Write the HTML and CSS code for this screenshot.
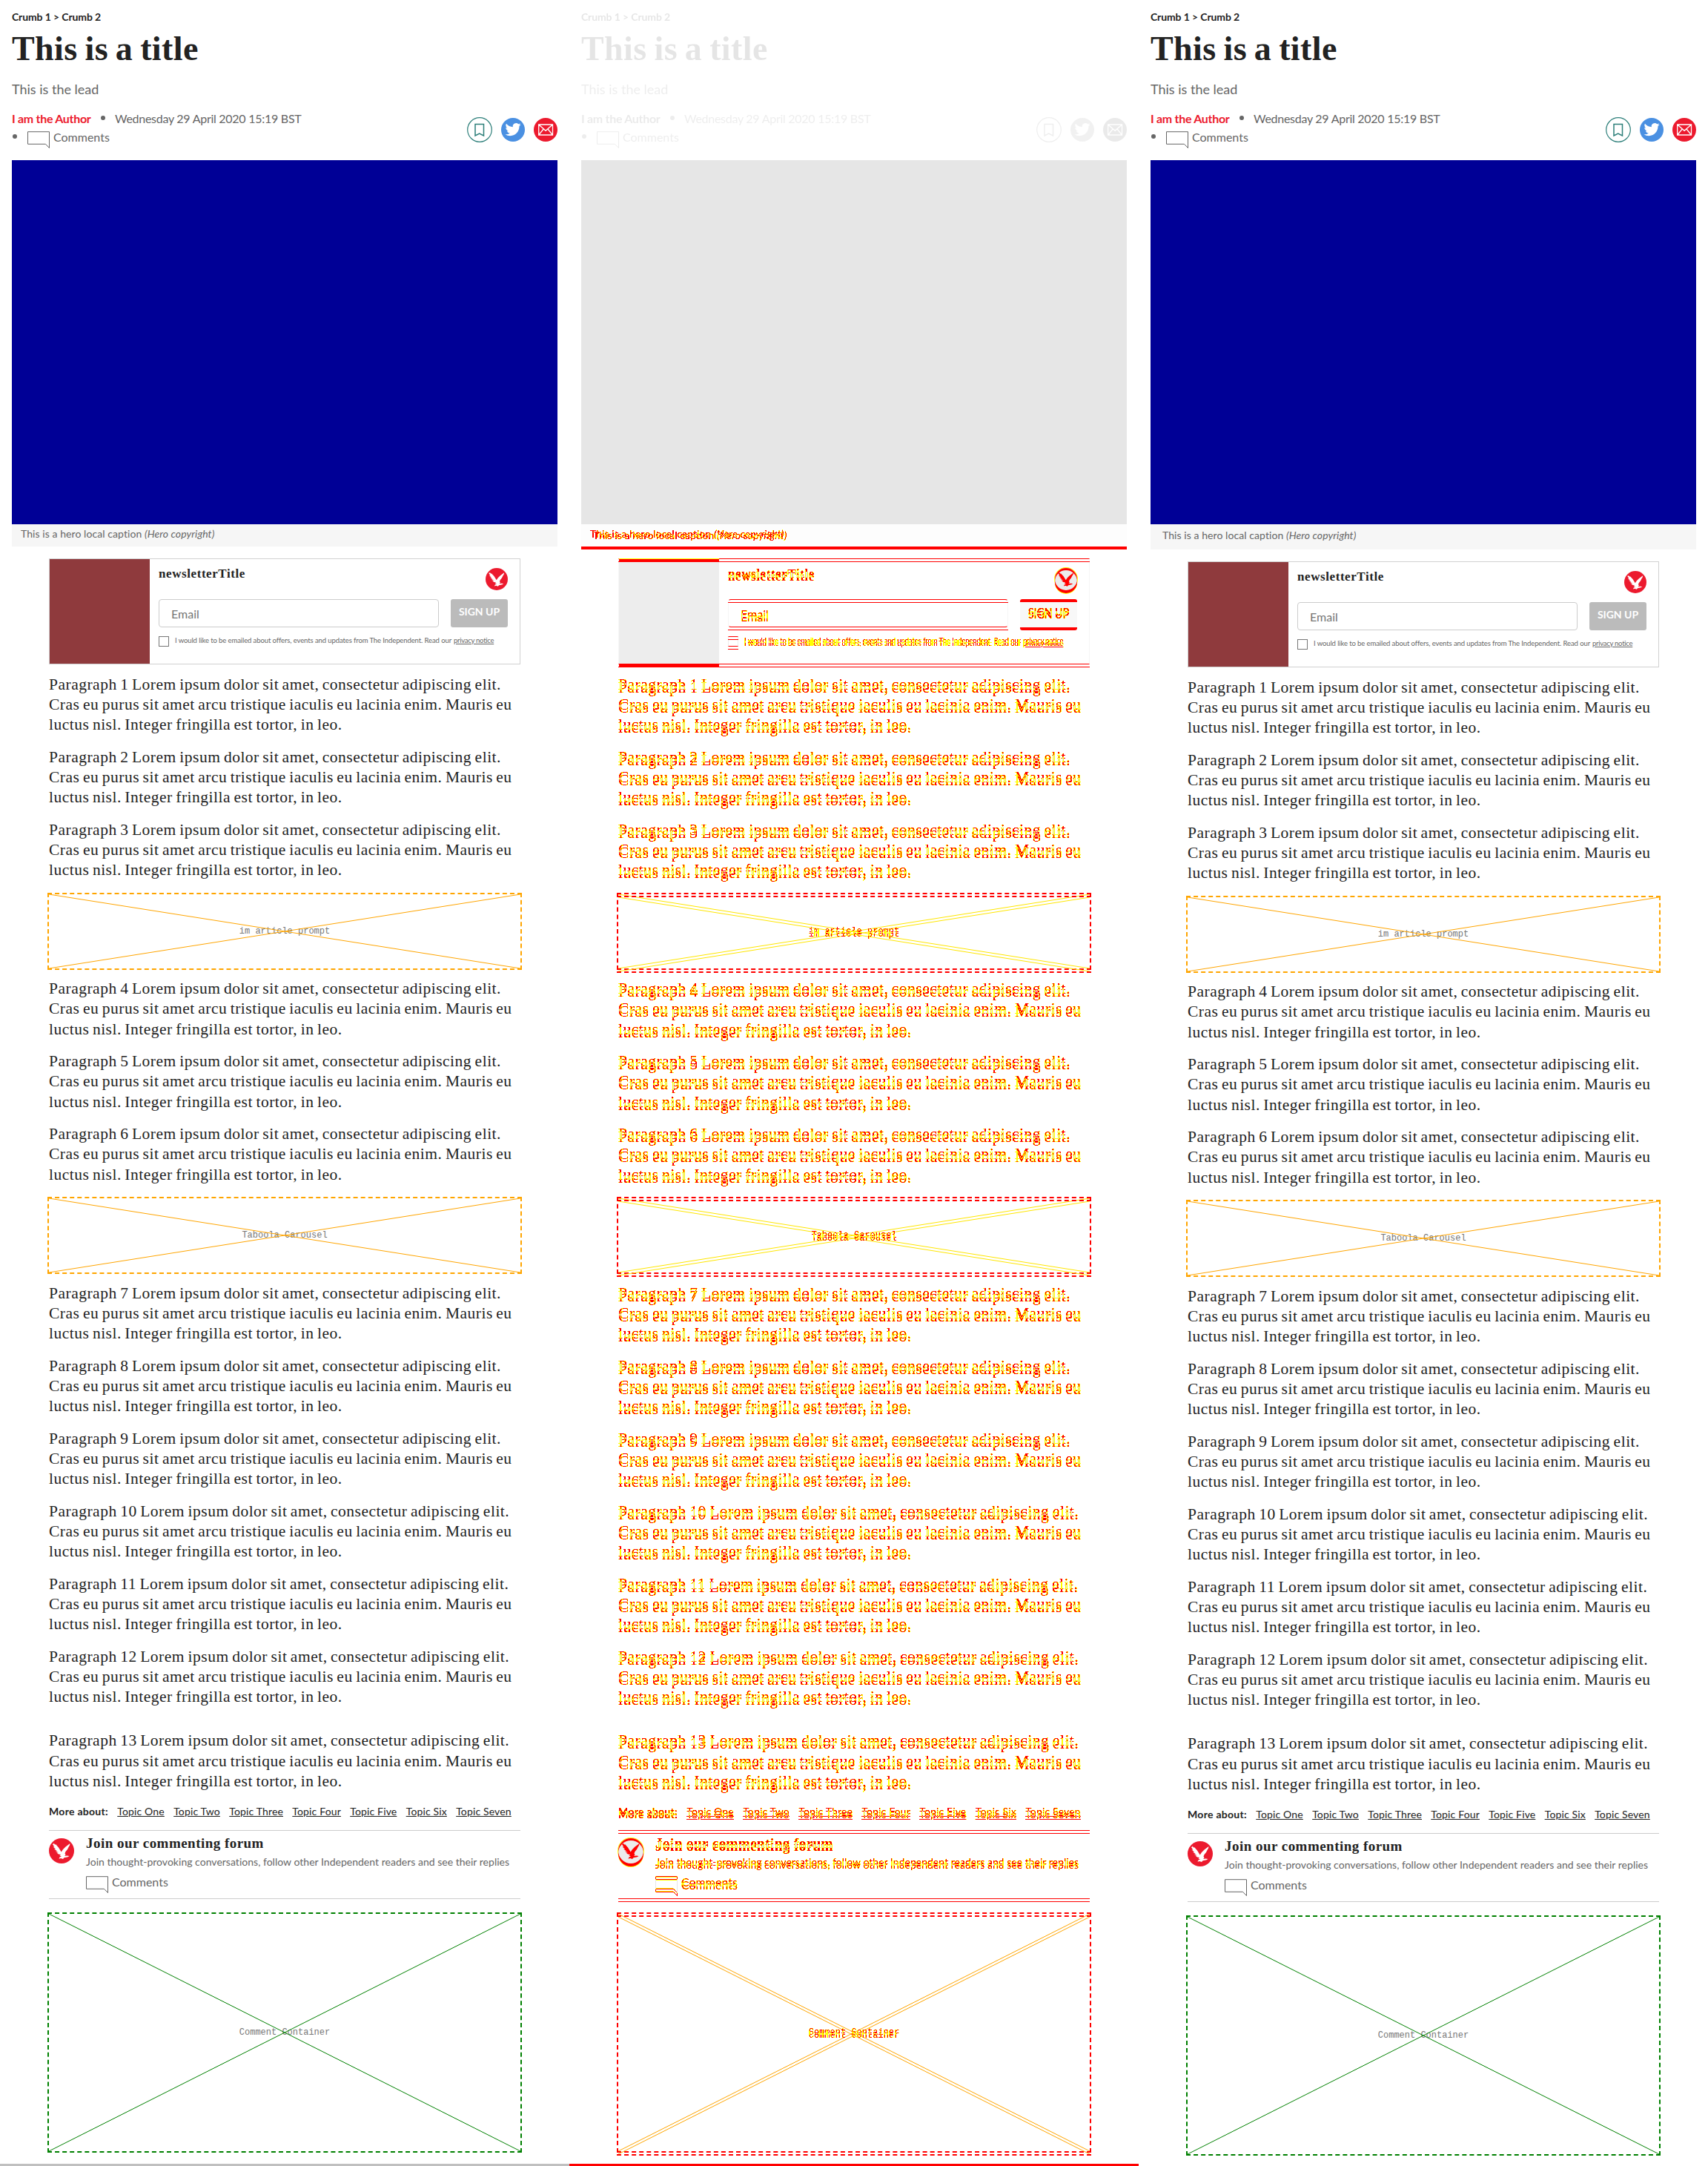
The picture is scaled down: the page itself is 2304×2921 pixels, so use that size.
FILE: index.html
```html
<!DOCTYPE html>
<html lang="en">
<head>
<meta charset="utf-8">
<title>Article comparison</title>
<link rel="stylesheet" href="styles.css">
</head>
<body>
<svg class="defs" width="0" height="0" aria-hidden="true">
  <symbol id="eagle" viewBox="0 0 34 34">
    <circle cx="17" cy="17" r="17" fill="var(--brand)"/>
    <path fill="var(--bird, #fff)" d="M4.500 7.500L6 8l.5-1.500L8.500 9l.3-1.200L13 12.500l3.700 6L19 15l3.500-3.500L28.500 7l-.5 2.500-1.500 2.500-1.500 3-2.500 3-1 2.500 1 2-1.500 1.500 3.500-.5 3 .5-2 1.300-5 1-1.500 1.700-3-1-2.500.7 1-2.200 2.500-1-2.500-1 1.500-1.500-3-.5-2.500-2 2.500-.5L9 18l2-.8-4-2.700h2.200L5.500 11.500h1.800z"/>
  </symbol>
  <symbol id="bubble" viewBox="0 0 30 24">
    <path d="M.5.700h29v21.800l-5-5.200H.500z" fill="none" stroke="var(--line, #666)" stroke-width="1"/>
  </symbol>
  <filter id="moved" x="-2%" y="-10%" width="104%" height="145%" color-interpolation-filters="sRGB">
    <feOffset in="SourceAlpha" dy="4" result="shifted"/>
    <feComposite in="SourceAlpha" in2="shifted" operator="xor" result="changed"/>
    <feComponentTransfer in="changed" result="soft"><feFuncA type="discrete" tableValues="0 1 1 1 1 1 1 1"/></feComponentTransfer>
    <feComponentTransfer in="changed" result="hard"><feFuncA type="discrete" tableValues="0 0 0 0 0 1 1 1"/></feComponentTransfer>
    <feFlood flood-color="#e6e6e6"/><feComposite in2="shifted" operator="in"/><feComposite in2="SourceAlpha" operator="in" result="same"/>
    <feFlood flood-color="#ff0"/><feComposite in2="soft" operator="in" result="yellow"/>
    <feFlood flood-color="#f00"/><feComposite in2="hard" operator="in" result="red"/>
    <feMerge><feMergeNode in="same"/><feMergeNode in="yellow"/><feMergeNode in="red"/></feMerge>
  </filter>
  <filter id="moved-caption" x="-2%" y="-10%" width="106%" height="145%" color-interpolation-filters="sRGB">
    <feOffset in="SourceAlpha" dx="4" dy="2" result="shifted"/>
    <feComposite in="SourceAlpha" in2="shifted" operator="xor" result="changed"/>
    <feComponentTransfer in="changed" result="soft"><feFuncA type="discrete" tableValues="0 1 1 1 1 1 1 1"/></feComponentTransfer>
    <feComponentTransfer in="changed" result="hard"><feFuncA type="discrete" tableValues="0 0 0 1 1 1"/></feComponentTransfer>
    <feFlood flood-color="#ff0"/><feComposite in2="soft" operator="in" result="yellow"/>
    <feFlood flood-color="#f00"/><feComposite in2="hard" operator="in" result="red"/>
    <feMerge><feMergeNode in="yellow"/><feMergeNode in="red"/></feMerge>
  </filter>
</svg>
<main class="board">
  <article class="panel panel--before">
    <header class="head">
      <p class="crumbs">Crumb 1 &gt; Crumb 2</p>
      <h1 class="title">This is a title</h1>
      <p class="lead">This is the lead</p>
      <div class="meta">
        <div class="byline">
          <div class="row"><span class="author">I am the Author</span><i class="dot"></i><span class="date">Wednesday 29 April 2020 15:19 BST</span></div>
          <div class="row row--comments"><i class="dot"></i><svg class="bubble"><use href="#bubble"/></svg><span class="comments">Comments</span></div>
        </div>
        <div class="share">
          <svg class="save" viewBox="0 0 34 34"><circle cx="17" cy="17" r="16.300" fill="none" stroke="#2d7f7a" stroke-width="1.200"/><path d="M11 9.500h11.500v15.500L16.700 22 11 25z" fill="none" stroke="#2d7f7a" stroke-width="1.500"/></svg>
          <svg class="social" viewBox="0 0 32 32"><circle cx="16" cy="16" r="16" fill="#4a90e2"/><path fill="#fff" transform="translate(5.500 5) scale(.88)" d="M23.950 4.570a10 10 0 01-2.820.780 4.960 4.960 0 002.160-2.730c-.950.560-2 .960-3.130 1.190a4.920 4.920 0 00-8.380 4.480C7.690 8.100 4.070 6.130 1.640 3.160a4.820 4.820 0 00-.670 2.480c0 1.710.870 3.210 2.190 4.100a4.900 4.900 0 01-2.230-.620v.060a4.920 4.920 0 003.950 4.830 5 5 0 01-2.210.080 4.940 4.940 0 004.600 3.420A9.870 9.870 0 010 19.540a14 14 0 007.550 2.210c9.050 0 14-7.500 14-13.980 0-.210 0-.420-.020-.630a9.940 9.940 0 002.460-2.550z"/></svg>
          <svg class="social" viewBox="0 0 32 32"><circle cx="16" cy="16" r="16" fill="#ec1a2e"/><path d="M6.700 9h18.800v14H6.700zM6.700 9l9.400 8.300L25.500 9M6.700 23l6.500-8M25.500 23L19 15" fill="none" stroke="#fff" stroke-width="1.300"/></svg>
        </div>
      </div>
    </header>
    <figure class="hero">
      <div class="hero-image"></div>
      <figcaption><span>This is a hero local caption <em>(Hero copyright)</em></span></figcaption>
    </figure>
    <div class="content">
      <section class="newsletter">
        <div class="thumb"></div>
        <div class="signup">
          <div class="signup-head"><h2>newsletterTitle</h2><svg class="logo"><use href="#eagle"/></svg></div>
          <div class="fields"><div class="email"><span>Email</span></div><div class="button"><span>SIGN UP</span></div></div>
          <div class="consent"><i class="check"></i><span class="agree">I would like to be emailed about offers, events and updates from The Independent. Read our</span><span class="privacy">privacy notice</span></div>
        </div>
      </section>
      <p class="copy">Paragraph 1 Lorem ipsum dolor sit amet, consectetur adipiscing elit.<br>Cras eu purus sit amet arcu tristique iaculis eu lacinia enim. Mauris eu<br>luctus nisl. Integer fringilla est tortor, in leo.</p>
      <p class="copy">Paragraph 2 Lorem ipsum dolor sit amet, consectetur adipiscing elit.<br>Cras eu purus sit amet arcu tristique iaculis eu lacinia enim. Mauris eu<br>luctus nisl. Integer fringilla est tortor, in leo.</p>
      <p class="copy">Paragraph 3 Lorem ipsum dolor sit amet, consectetur adipiscing elit.<br>Cras eu purus sit amet arcu tristique iaculis eu lacinia enim. Mauris eu<br>luctus nisl. Integer fringilla est tortor, in leo.</p>
      <div class="slot"><svg viewBox="0 0 636 100" preserveAspectRatio="none"><path d="M0 0L636 100M0 100L636 0"/></svg><span class="label">im article prompt</span></div>
      <p class="copy">Paragraph 4 Lorem ipsum dolor sit amet, consectetur adipiscing elit.<br>Cras eu purus sit amet arcu tristique iaculis eu lacinia enim. Mauris eu<br>luctus nisl. Integer fringilla est tortor, in leo.</p>
      <p class="copy">Paragraph 5 Lorem ipsum dolor sit amet, consectetur adipiscing elit.<br>Cras eu purus sit amet arcu tristique iaculis eu lacinia enim. Mauris eu<br>luctus nisl. Integer fringilla est tortor, in leo.</p>
      <p class="copy">Paragraph 6 Lorem ipsum dolor sit amet, consectetur adipiscing elit.<br>Cras eu purus sit amet arcu tristique iaculis eu lacinia enim. Mauris eu<br>luctus nisl. Integer fringilla est tortor, in leo.</p>
      <div class="slot"><svg viewBox="0 0 636 100" preserveAspectRatio="none"><path d="M0 0L636 100M0 100L636 0"/></svg><span class="label">Taboola Carousel</span></div>
      <p class="copy">Paragraph 7 Lorem ipsum dolor sit amet, consectetur adipiscing elit.<br>Cras eu purus sit amet arcu tristique iaculis eu lacinia enim. Mauris eu<br>luctus nisl. Integer fringilla est tortor, in leo.</p>
      <p class="copy">Paragraph 8 Lorem ipsum dolor sit amet, consectetur adipiscing elit.<br>Cras eu purus sit amet arcu tristique iaculis eu lacinia enim. Mauris eu<br>luctus nisl. Integer fringilla est tortor, in leo.</p>
      <p class="copy">Paragraph 9 Lorem ipsum dolor sit amet, consectetur adipiscing elit.<br>Cras eu purus sit amet arcu tristique iaculis eu lacinia enim. Mauris eu<br>luctus nisl. Integer fringilla est tortor, in leo.</p>
      <p class="copy">Paragraph 10 Lorem ipsum dolor sit amet, consectetur adipiscing elit.<br>Cras eu purus sit amet arcu tristique iaculis eu lacinia enim. Mauris eu<br>luctus nisl. Integer fringilla est tortor, in leo.</p>
      <p class="copy">Paragraph 11 Lorem ipsum dolor sit amet, consectetur adipiscing elit.<br>Cras eu purus sit amet arcu tristique iaculis eu lacinia enim. Mauris eu<br>luctus nisl. Integer fringilla est tortor, in leo.</p>
      <p class="copy">Paragraph 12 Lorem ipsum dolor sit amet, consectetur adipiscing elit.<br>Cras eu purus sit amet arcu tristique iaculis eu lacinia enim. Mauris eu<br>luctus nisl. Integer fringilla est tortor, in leo.</p>
      <p class="copy copy--last">Paragraph 13 Lorem ipsum dolor sit amet, consectetur adipiscing elit.<br>Cras eu purus sit amet arcu tristique iaculis eu lacinia enim. Mauris eu<br>luctus nisl. Integer fringilla est tortor, in leo.</p>
      <nav class="topics"><b>More about:</b><a>Topic One</a><a>Topic Two</a><a>Topic Three</a><a>Topic Four</a><a>Topic Five</a><a>Topic Six</a><a>Topic Seven</a></nav>
      <section class="forum">
        <svg class="logo"><use href="#eagle"/></svg>
        <div class="forum-text">
          <h3>Join our commenting forum</h3>
          <p>Join thought-provoking conversations, follow other Independent readers and see their replies</p>
          <div class="row"><svg class="bubble"><use href="#bubble"/></svg><span class="comments">Comments</span></div>
        </div>
      </section>
      <div class="slot slot--comments"><svg viewBox="0 0 636 320" preserveAspectRatio="none"><path d="M0 0L636 320M0 320L636 0"/></svg><span class="label">Comment Container</span></div>
    </div>
    <div class="end"></div>
  </article>
</main>
<script src="panels.js"></script>
</body>
</html>
```
FILE: panels.js
```js
// The diff and after panels share the markup of the before panel.
const board = document.querySelector('.board');
const before = board.querySelector('.panel');
for (const kind of ['diff', 'after']) {
  const panel = before.cloneNode(true);
  panel.className = 'panel panel--' + kind;
  board.append(panel);
}
```
FILE: styles.css
```css
:root { --brand: #ec1a2e; }
* { box-sizing: border-box; }
body { margin: 0; background: #fff; color: #222; font-family: Lato, "Open Sans", sans-serif; }
h1, h2, h3, p, figure { margin: 0; font-weight: normal; }
svg { display: block; flex: none; }
.defs { position: absolute; }
.board { display: flex; width: 2304px; height: 2921px; overflow: hidden; }
.panel { width: 768px; height: 2921px; flex: none; display: flex; flex-direction: column; padding: 13px 0 0; white-space: nowrap; }
.head { height: 203px; padding: 0 16px; }
.crumbs { font-size: 14px; line-height: 20px; font-weight: 700; letter-spacing: -.12px; }
.title { margin-top: 8px; font: 700 46px/50px "Liberation Serif", serif; letter-spacing: .4px; word-spacing: -2px; }
.lead { margin-top: 17px; font-size: 18px; line-height: 24px; color: #666; }
.meta { display: flex; justify-content: space-between; margin-top: 15px; }
.row { display: flex; height: 25px; align-items: flex-start; font-size: 16px; line-height: 25px; color: #666; }
.author { width: 120px; color: var(--brand); font-weight: 700; letter-spacing: -.3px; }
.date { letter-spacing: -.27px; }
.dot { width: 6px; height: 6px; margin: 9px 13px 0 0; border-radius: 50%; background: #666; }
.row--comments .dot { margin-left: 1px; }
.bubble { width: 30px; height: 24px; margin: 5px 5px 0 0; }
.row--comments .bubble { margin-left: 1px; }
.share { display: flex; align-items: center; gap: 12px; height: 34px; margin-top: 11px; }
.save { width: 34px; height: 34px; }
.social { width: 32px; height: 32px; }
.hero { margin: 0 16px; }
.hero-image { height: 491px; background: #000096; }
figcaption { height: 30px; padding: 2px 12px; background: #f6f6f6; color: #666; font-size: 14px; line-height: 21px; letter-spacing: .07px; }
figcaption span { display: inline-block; }
.content { width: 636px; margin: 16px 66px 0; }
.newsletter { position: relative; display: flex; height: 143px; border: 1px solid #d1d1d1; margin-bottom: 13.600px; }
.thumb { width: 135px; flex: none; background: #8f3a3d; }
.signup { flex: 1; min-width: 0; padding: 10px 16px 0 12px; }
.signup-head { display: flex; justify-content: space-between; align-items: flex-start; height: 44px; }
.signup-head h2 { font: 700 17px/20px "Liberation Serif", serif; letter-spacing: .58px; }
.signup-head .logo { width: 30px; height: 30px; margin-top: 2px; }
.fields { display: flex; gap: 16px; height: 38px; }
.email { position: relative; flex: 1; border: 1px solid #ccc; border-radius: 4px; padding: 0 16px; font-size: 16px; line-height: 37px; color: #757575; }
.button { width: 77px; flex: none; border-radius: 3px; background: #bbb; color: #fff; font-size: 14px; font-weight: 700; line-height: 33px; text-align: center; }
.email span, .button span { display: inline-block; }
.consent { display: flex; margin-top: 11px; font-size: 9.500px; line-height: 14px; color: #666; }
.check { position: relative; flex: none; width: 14px; height: 14px; margin: 1px 8px 0 0; border: 1px solid #767676; }
.agree { letter-spacing: -.1px; }
.privacy { margin-left: 3px; text-decoration: underline; letter-spacing: -.27px; }
.copy { margin-bottom: 16px; font: 21.500px/27.333px "Liberation Serif", serif; letter-spacing: .5px; word-spacing: -1.350px; }
.copy--last { margin-top: 31.600px; }
.slot { position: relative; display: grid; place-items: center; height: 104px; margin: 0 -2px 12.600px; border: 2px dashed orange; color: orange; }
.slot svg { position: absolute; inset: 0; width: 100%; height: 100%; }
.slot path { fill: none; stroke: currentColor; stroke-width: 1; }
.label { color: #777; font: 12px "Liberation Mono", monospace; }
.topics { display: flex; gap: 12.300px; padding-top: 1px; font-size: 14px; line-height: 20px; letter-spacing: .15px; }
.topics b { letter-spacing: .29px; }
.topics a { text-decoration: underline; text-underline-offset: 1px; }
.forum { position: relative; display: flex; height: 93px; margin: 14.400px 0 18px; border: solid #ccc; border-width: 1px 0; }
.forum .logo { width: 34px; height: 34px; margin: 10px 16px 0 0; }
.forum-text { padding-top: 6px; color: #666; }
.forum h3 { color: #222; font: 700 19px/22px "Liberation Serif", serif; letter-spacing: .47px; }
.forum p { margin-top: 4.600px; font-size: 14px; line-height: 20px; letter-spacing: .02px; }
.forum .row { margin-top: 4px; }
.slot--comments { height: 324px; color: green; border-color: green; margin-bottom: 0; }
.end { height: 3px; flex: none; margin-top: auto; background: #c0c0c0; }

.panel--after .end { background: none; }
.panel--after figcaption { height: 34px; padding: 4px 16px; }

/* Diff panel: unchanged parts fade out, moved parts show as red and yellow doubles 4px apart. */
.panel--diff .head { filter: grayscale(1); opacity: .11; }
.panel--diff .hero-image { background: #e6e6e6; }
.panel--diff figcaption { height: 34px; background: #fdfdfd; border-bottom: 4px solid red; color: #000; }
.panel--diff figcaption span { filter: url(#moved-caption); }
.panel--diff .content { margin-top: 12px; }
.panel--diff .content :is(h2, h3, p, b, a, span, .bubble) { color: #000; --line: #000; filter: url(#moved); }
.panel--diff .newsletter { border-color: red #f6f6f6; }
.panel--diff .newsletter::after,
.panel--diff .email::after,
.panel--diff .check::after,
.panel--diff .forum::after {
  content: ""; position: absolute; inset: 3px -1px -5px; border: solid red; border-width: 1px 0;
}
.panel--diff .forum::after { inset: 3px 0 -5px; }
.panel--diff .thumb { height: 145px; background: #ededed; border: solid red; border-width: 4px 0; box-shadow: 0 1px #ff0, 0 -1px #ff0; }
.panel--diff .email { border-color: red #f6f6f6; }
.panel--diff .button { height: 42px; line-height: 25px; background: #f8f8f8; border: solid red; border-width: 4px 0; }
.panel--diff .check { border-color: red #eee; }
.panel--diff .logo { --brand: none; --bird: #f00; border-radius: 50%; background: #ececec; box-shadow: inset 0 3px red, 0 4px red, 0 0 0 1px #ff0, 0 5px #ff0; }
.panel--diff .forum { border-color: red; }
.panel--diff .bubble { overflow: visible; }
.panel--diff .slot { border-color: red; color: #ffe600; }
.panel--diff .slot::after { content: ""; position: absolute; inset: 2px -2px -6px; border: dashed red; border-width: 2px 0; }
.panel--diff .slot svg { filter: drop-shadow(0 4px #ffe600); }
.panel--diff .slot--comments { color: #ffa500; }
.panel--diff .slot--comments svg { filter: drop-shadow(0 4px #ffa500); }
.panel--diff .end { background: red; }
```
